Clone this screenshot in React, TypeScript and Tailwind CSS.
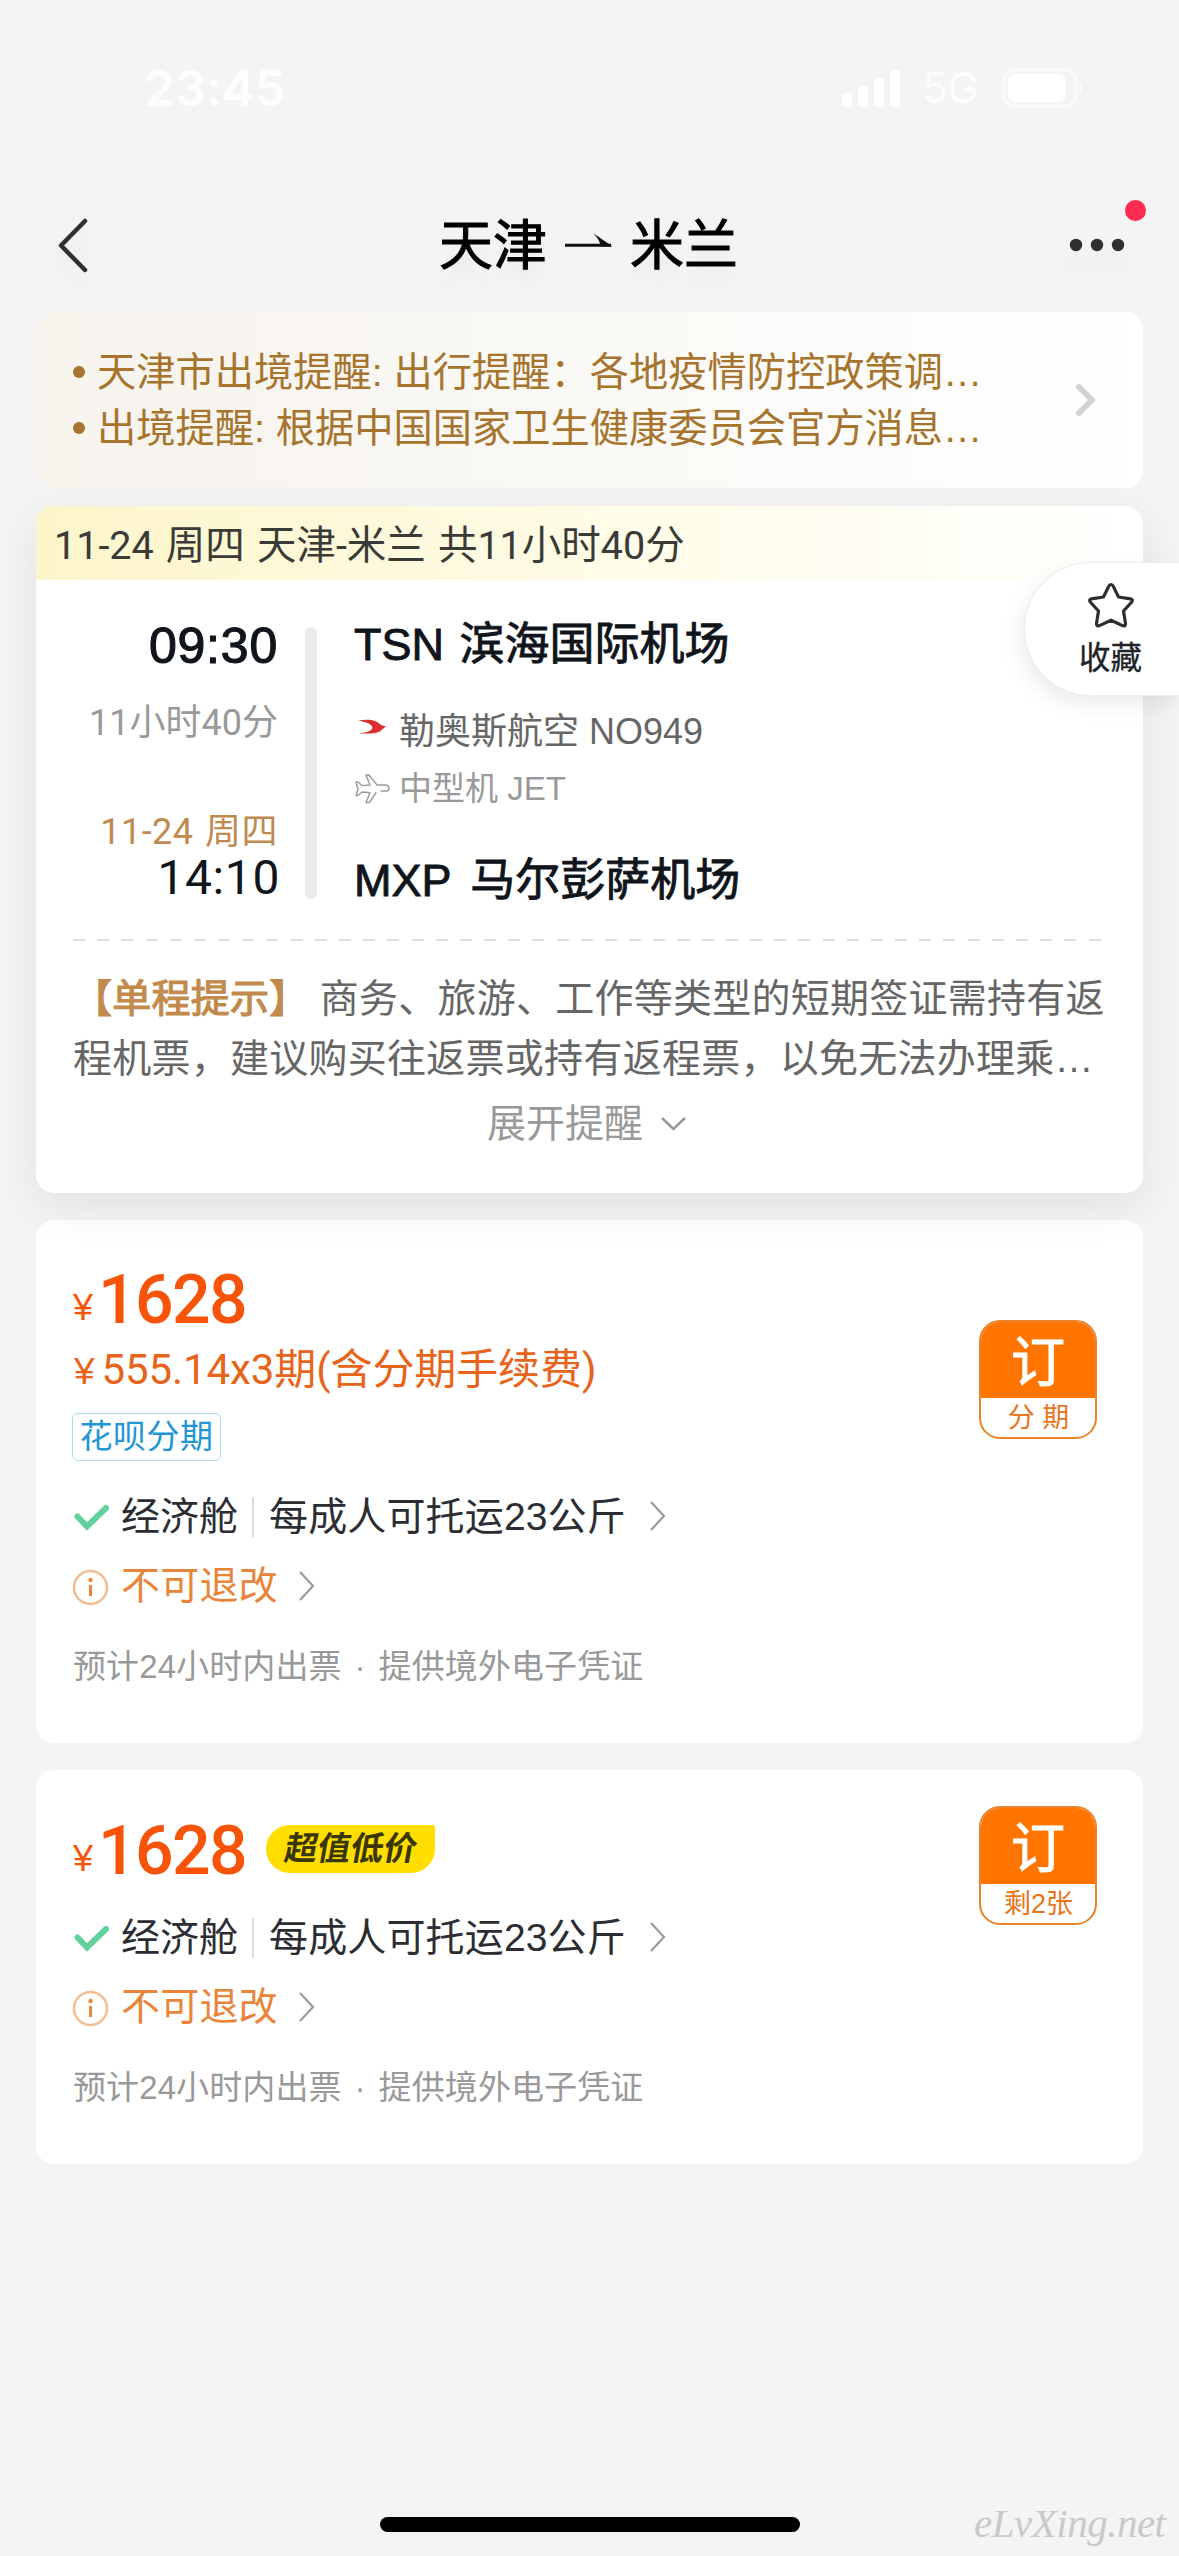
import React from "react";

function StatusBar() {
  return (
    <div className="flex h-[180px] items-start justify-between pr-[95px] pl-[144px] text-white">
      <div className="mt-[58px] font-['Inter'] text-[50px] leading-[60px] font-semibold tracking-[-0.4px] opacity-90">23:45</div>
      <div className="mt-[68px] flex items-center">
        <svg width="60" height="38" viewBox="0 0 60 38" fill="currentColor">
          <rect x="0" y="24" width="10" height="14" rx="3" />
          <rect x="16" y="17" width="10" height="21" rx="3" />
          <rect x="32" y="9" width="10" height="29" rx="3" />
          <rect x="48" y="1" width="10" height="37" rx="3" />
        </svg>
        <span className="ml-[20px] w-[60px] font-['Inter'] text-[42px] leading-[40px] opacity-80">5G</span>
        <svg className="ml-[20px]" width="82" height="40" viewBox="0 0 82 40">
          <rect x="1.5" y="1.5" width="73" height="37" rx="12" fill="none" stroke="#f9f9f9" strokeWidth="3" />
          <rect x="6" y="6" width="58" height="28" rx="8" fill="#fff" />
          <path d="M78 14c3.500 2 3.500 10 0 12z" fill="#fafafa" />
        </svg>
      </div>
    </div>
  );
}

function NavBar() {
  return (
    <div className="relative flex h-[132px] items-start justify-between pr-[54px] pl-[56px]">
      <svg className="mt-[38px] drop-shadow-[0_14px_8px_rgba(0,0,0,0.05)]" width="34" height="56" viewBox="0 0 34 56" fill="none" stroke="#2f2f2f" strokeWidth="4.500" strokeLinecap="round" strokeLinejoin="round">
        <path d="M29 3 5 27.500 29 52" />
      </svg>
      <div className="absolute top-[36px] left-[439px] flex h-[60px] items-center text-[54px] leading-[60px] text-black [-webkit-text-stroke:1px_#000] [text-shadow:0_16px_12px_rgba(0,0,0,0.04)]">
        <span className="w-[108px]">天津</span>
        <svg className="mt-[-12px] mr-[16px] ml-[17px]" width="50" height="16" viewBox="0 0 50 16">
          <path d="M1 13.200h46" stroke="#111" strokeWidth="3" />
          <path d="M29 1 48.500 14.600H36.500C36.500 10 33 5 29 1z" fill="#111" />
        </svg>
        <span>米兰</span>
      </div>
      <svg className="mt-[18px] drop-shadow-[0_14px_8px_rgba(0,0,0,0.04)]" width="78" height="62" viewBox="0 0 78 62">
        <g fill="#2f2f2f">
          <circle cx="29" cy="47" r="6.200" />
          <circle cx="50" cy="47" r="6.200" />
          <circle cx="71" cy="47" r="6.200" />
        </g>
      </svg>
      <div className="absolute top-[20px] right-[33px] size-[21px] rounded-full bg-[#ff2b50]" />
    </div>
  );
}

function Notice() {
  const lines = ["天津市出境提醒: 出行提醒：各地疫情防控政策调…", "出境提醒: 根据中国国家卫生健康委员会官方消息…"];
  return (
    <section className="flex h-[176px] items-start rounded-[18px] bg-linear-to-r from-[#f7f3ed] via-[#faf9f6] via-50% to-white pt-[32px] pl-[37px]">
      <div className="w-[1000px] text-[39.250px] leading-[56px] text-[#a6742c]">
        {lines.map((line) => (
          <div key={line} className="flex items-center whitespace-nowrap">
            <span className="mr-[12px] size-[12px] shrink-0 rounded-full bg-[#a6742c]" />
            {line}
          </div>
        ))}
      </div>
      <svg className="mt-[39px]" width="24" height="34" viewBox="0 0 24 34" fill="none" stroke="#d3d3d3" strokeWidth="6" strokeLinecap="round" strokeLinejoin="round">
        <path d="M6 4l13 13L6 30" />
      </svg>
    </section>
  );
}

function PlaneIcon() {
  return (
    <svg width="37" height="32" viewBox="0 0 37 32" fill="none" stroke="#999" strokeWidth="1.400" strokeLinecap="round" strokeLinejoin="round">
      <path d="M27 18h5c4 0 4-5 0-6h-9L15 2h-3l4 10-8 .6L4 9H2l2 7-2 6.500h2l4-3.500 8 .6-4 10h3.500L22 19.500" />
    </svg>
  );
}

function FlightCard() {
  return (
    <section className="relative z-10 mt-[18px] h-[687px] rounded-[18px] bg-white shadow-[0_14px_44px_rgba(0,0,0,0.08)]">
      <div className="h-[74px] rounded-t-[18px] bg-linear-to-r from-[#fdf5ca] via-[#fffce9] via-55% to-white pt-[5px] pl-[18px] font-['Roboto','Noto_Sans_CJK_SC',sans-serif] text-[39.500px] leading-[70px] text-[#3a3a36] [word-spacing:2.300px]">
        11-24 周四 天津-米兰 共11小时40分
      </div>
      <div className="flex h-[359px] items-start">
        <div className="flex w-[242px] flex-col items-end pt-[36px] font-['Roboto','Noto_Sans_CJK_SC',sans-serif] whitespace-nowrap">
          <div className="font-['Liberation_Sans'] text-[50px] leading-[60px] tracking-[0.8px] text-[#10151c] [-webkit-text-stroke:1.2px_#10151c]">09:30</div>
          <div className="mt-[27px] text-[36px] leading-[40px] text-[#999]">11小时40分</div>
          <div className="mt-[69px] text-[36px] leading-[40px] tracking-[0.5px] text-[#bf8a50] [word-spacing:2px]">11-24 周四</div>
          <div className="mt-px mr-[-2px] text-[48px] leading-[50px] tracking-[0.6px] text-[#10151c]">14:10</div>
        </div>
        <div className="mt-[47px] ml-[27px] h-[272px] w-[12px] rounded-full bg-[#e9ebed]" />
        <div className="ml-[37px] pt-[35px]">
          <div className="text-[45px] leading-[60px] text-[#10151c] [-webkit-text-stroke:0.9px_#10151c] [word-spacing:3px]">TSN 滨海国际机场</div>
          <div className="mt-[37px] flex h-[40px] items-center text-[36px] leading-[40px] text-[#666]">
            <svg className="mt-[-10px] mr-[13px] ml-[4px]" width="28" height="16" viewBox="0 0 28 16">
              <path d="M0 1.500C10-.5 19 1 23 6l5 1.500c-2 1-4 3-6 5-5 2.500-12 2-22 2 6-1 12-1.500 14-4.500C16 6 9 3 0 1.500z" fill="#d8302c" />
            </svg>
            勒奥斯航空 NO949
          </div>
          <div className="mt-[20px] flex h-[34px] items-center text-[33px] leading-[34px] text-[#999]">
            <span className="mr-[8px]">
              <PlaneIcon />
            </span>
            中型机 JET
          </div>
          <div className="mt-[45px] text-[45px] leading-[60px] text-[#10151c] [-webkit-text-stroke:0.9px_#10151c] [word-spacing:7px]">MXP 马尔彭萨机场</div>
        </div>
      </div>
      <div className="ml-[37px] h-[2px] w-[1028px] bg-[repeating-linear-gradient(90deg,#dfdfdf_0_12px,transparent_12px_24.180px)]" />
      <div className="mt-[28px] pl-[37px] text-[39px] leading-[60px] tracking-[0.26px] whitespace-nowrap text-[#666]">
        <div>
          <span className="text-[#c28a4c] [-webkit-text-stroke:1.2px_#c28a4c]">【单程提示】</span> 商务、旅游、工作等类型的短期签证需持有返
        </div>
        <div>程机票，建议购买往返票或持有返程票，以免无法办理乘…</div>
      </div>
      <div className="mt-[10px] flex h-[50px] items-center pl-[451px] text-[39px] leading-[50px] text-[#999]">
        展开提醒
        <svg className="ml-[17px]" width="27" height="18" viewBox="0 0 27 18" fill="none" stroke="#999" strokeWidth="2.500">
          <path d="M2 3l11.500 11L25 3" />
        </svg>
      </div>
    </section>
  );
}

function ThinChevron() {
  return (
    <svg width="18" height="32" viewBox="0 0 18 32" fill="none" stroke="#9b9b9b" strokeWidth="2.200">
      <path d="M2 2l13 14L2 30" />
    </svg>
  );
}

function BookButton({ label }: { label: string }) {
  return (
    <button className="flex h-[119px] w-[118px] flex-col overflow-hidden rounded-[21px] border-2 border-[#e8832c] bg-white">
      <span className="h-[76px] w-full bg-[#ff7500] text-center text-[54px] leading-[83px] text-white [-webkit-text-stroke:1px_#fff]">订</span>
      <span className="w-full pt-px pl-px text-center text-[27px] leading-[39px] whitespace-pre text-[#e8751a]">{label}</span>
    </button>
  );
}

function FareDetails() {
  return (
    <>
      <div className="flex h-[44px] items-center text-[39px] leading-[44px] text-[#2b2d33]">
        <svg className="mr-[12px]" width="37" height="28" viewBox="0 0 37 28" fill="none" stroke="#62d19d" strokeWidth="6" strokeLinecap="round" strokeLinejoin="round">
          <path d="M5.500 13.500 15 23.500 34 5" strokeLinejoin="miter" />
        </svg>
        <span>经济舱</span>
        <span className="mr-[15px] ml-[14px] h-[40px] w-[2px] bg-[#dcdcdc]" />
        <span className="tracking-[0.150px]">每成人可托运23公斤</span>
        <span className="mb-[3px] ml-[23px]">
          <ThinChevron />
        </span>
      </div>
      <div className="mt-[25px] flex h-[44px] items-center text-[39px] leading-[44px] text-[#e8853a]">
        <svg className="mt-[2px] mr-[12px]" width="37" height="37" viewBox="0 0 37 37">
          <circle cx="18.500" cy="18.500" r="16.500" fill="none" stroke="#f2be91" strokeWidth="2.500" />
          <circle cx="18.500" cy="11" r="2.200" fill="#e8853a" />
          <path d="M18.500 16v11" stroke="#e8853a" strokeWidth="3" />
        </svg>
        <span className="tracking-[0.200px]">不可退改</span>
        <span className="ml-[20px]">
          <ThinChevron />
        </span>
      </div>
      <div className="mt-[39px] flex h-[40px] items-center pl-px text-[33px] leading-[40px] tracking-[0.100px] text-[#999]">
        <span>预计24小时内出票</span>
        <span className="w-[37px] text-center">·</span>
        <span>提供境外电子凭证</span>
      </div>
    </>
  );
}

function Price() {
  return (
    <div className="h-[80px] pt-px pl-px font-['Roboto'] text-[68px] leading-[80px] text-[#f75409]">
      <span className="mr-[5px] align-[3px] font-['Liberation_Sans'] text-[36px] leading-none">¥</span>
      <span className="font-medium tracking-[-1.700px]">1628</span>
    </div>
  );
}

export default function App() {
  return (
    <div className="relative h-[2556px] w-[1179px] overflow-hidden bg-[#f4f4f4] font-['Liberation_Sans','Noto_Sans_CJK_SC',sans-serif]">
      <StatusBar />
      <NavBar />
      <main className="px-[36px]">
        <Notice />
        <FlightCard />

        <section className="mt-[27px] flex h-[523px] justify-between rounded-[18px] bg-white pr-[46px] pl-[36px]">
          <div className="pt-[39px]">
            <Price />
            <div className="mt-[6px] pl-[2px] text-[42px] leading-[50px] text-[#e8641b]">
              <span className="mr-[7px] text-[37px] leading-none">¥</span>
              <span className="font-['Roboto','Noto_Sans_CJK_SC',sans-serif] tracking-[-0.100px]">555.14x3期(含分期手续费)</span>
            </div>
            <div className="mt-[18px] flex h-[48px] w-[149px] items-center justify-center rounded-[6px] border-[1.500px] border-[#a9d9ea] text-[33px] leading-[46px] tracking-[0.5px] text-[#2196d6]">
              花呗分期
            </div>
            <div className="mt-[34px]">
              <FareDetails />
            </div>
          </div>
          <div className="pt-[100px]">
            <BookButton label="分 期" />
          </div>
        </section>

        <section className="mt-[27px] flex h-[394px] justify-between rounded-[18px] bg-white pr-[46px] pl-[36px]">
          <div className="pt-[40px]">
            <div className="flex items-center">
              <div className="w-[194px]">
                <Price />
              </div>
              <div className="mt-[-2px] flex h-[48px] w-[169px] items-center justify-center rounded-[24px_2px_24px_24px] bg-[#ffde00] text-[33px] font-bold text-[#3a3606]">
                <span className="skew-x-[-10deg] leading-[48px]">超值低价</span>
              </div>
            </div>
            <div className="mt-[26px]">
              <FareDetails />
            </div>
          </div>
          <div className="pt-[36px]">
            <BookButton label="剩2张" />
          </div>
        </section>
      </main>

      <button className="absolute top-[562px] right-0 z-20 flex h-[134px] w-[155px] flex-col items-center rounded-l-full border border-r-0 border-[#ececec] bg-white pt-[17px] pl-[17px] shadow-[-4px_8px_22px_rgba(0,0,0,0.08)]">
        <svg width="50" height="50" viewBox="0 0 50 50" fill="none" stroke="#2c2e33" strokeWidth="3.200" strokeLinejoin="round">
          <path d="M25 4.500q1.500 0 2.200 1.600L32.500 17l12 1.800q3 .7 1.200 3.200L37.500 31l2 12.500q0 3.200-3 2.100L25 40.200 13.500 45.600q-3 1.100-3-2.100l2-12.500L4.300 22q-1.800-2.500 1.200-3.200l12-1.800 5.300-10.900Q23.500 4.500 25 4.500z" />
        </svg>
        <span className="mt-[8px] text-[31.500px] leading-[40px] text-[#202227] [-webkit-text-stroke:0.300px_#202227]">收藏</span>
      </button>

      <div className="absolute top-[2517px] left-[380px] h-[15px] w-[420px] rounded-full bg-black" />
      <div className="absolute top-[2500px] left-[974px] font-['Liberation_Serif',serif] text-[41px] leading-[46px] tracking-[-0.5px] text-[#c9c9c9] italic">eLvXing.net</div>
    </div>
  );
}
